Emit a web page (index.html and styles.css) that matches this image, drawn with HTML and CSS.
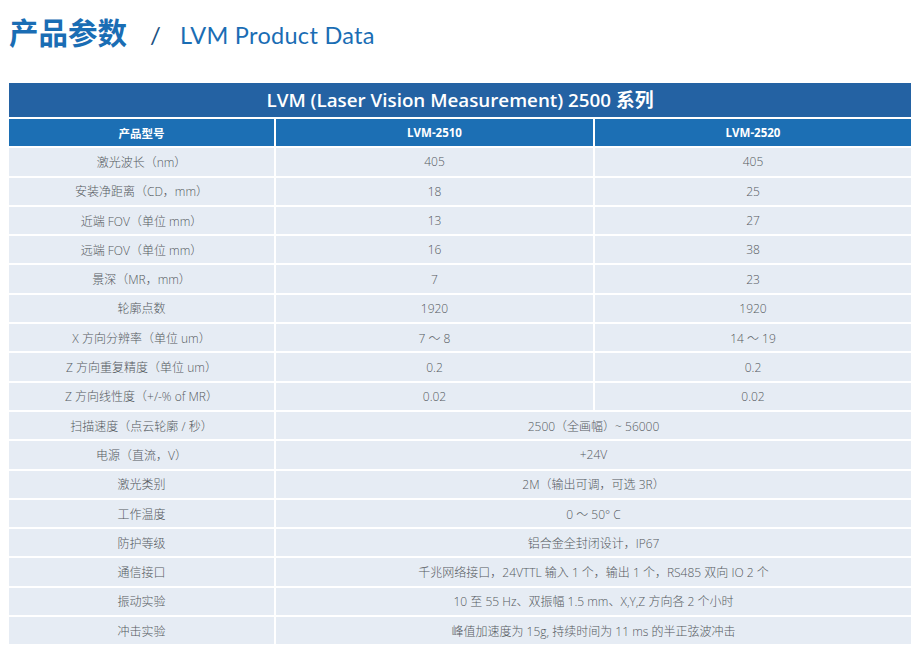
FILE: index.html
```html
<!DOCTYPE html>
<html lang="zh">
<head>
<meta charset="utf-8">
<link rel="stylesheet" href="styles.css">
</head>
<body>
<div class="page">
  <h1 class="heading"><span class="zh">产品参数</span><span class="slash">/</span><span class="en">LVM Product Data</span></h1>
  <div class="table">
    <div class="title">LVM (Laser Vision Measurement) 2500 系列</div>
    <div class="grid">
      <div class="hd">产品型号</div><div class="hd">LVM-2510</div><div class="hd">LVM-2520</div>
      <div class="c">激光波长（nm）</div><div class="c">405</div><div class="c">405</div>
      <div class="c">安装净距离（CD，mm）</div><div class="c">18</div><div class="c">25</div>
      <div class="c">近端 FOV（单位 mm）</div><div class="c">13</div><div class="c">27</div>
      <div class="c">远端 FOV（单位 mm）</div><div class="c">16</div><div class="c">38</div>
      <div class="c">景深（MR，mm）</div><div class="c">7</div><div class="c">23</div>
      <div class="c">轮廓点数</div><div class="c">1920</div><div class="c">1920</div>
      <div class="c">X 方向分辨率（单位 um）</div><div class="c">7 ～ 8</div><div class="c">14 ～ 19</div>
      <div class="c">Z 方向重复精度（单位 um）</div><div class="c">0.2</div><div class="c">0.2</div>
      <div class="c">Z 方向线性度（+/-% of MR）</div><div class="c">0.02</div><div class="c">0.02</div>
      <div class="c">扫描速度（点云轮廓 / 秒）</div><div class="c span">2500（全画幅）~ 56000</div>
      <div class="c">电源（直流，V）</div><div class="c span">+24V</div>
      <div class="c">激光类别</div><div class="c span">2M（输出可调，可选 3R）</div>
      <div class="c">工作温度</div><div class="c span">0 ～ 50° C</div>
      <div class="c">防护等级</div><div class="c span">铝合金全封闭设计，IP67</div>
      <div class="c">通信接口</div><div class="c span">千兆网络接口，24VTTL 输入 1 个，输出 1 个，RS485 双向 IO 2 个</div>
      <div class="c">振动实验</div><div class="c span">10 至 55 Hz、双振幅 1.5 mm、X,Y,Z 方向各 2 个小时</div>
      <div class="c">冲击实验</div><div class="c span">峰值加速度为 15g, 持续时间为 11 ms 的半正弦波冲击</div>
    </div>
  </div>
</div>
</body>
</html>
```

FILE: styles.css
```css
html, body {
  margin: 0;
  padding: 0;
  background: #ffffff;
}

.page {
  padding: 13px 6px 0 9px;
  font-family: "Open Sans", "Noto Sans CJK SC", sans-serif;
}

.heading {
  margin: 0 0 33px 0;
  display: flex;
  align-items: baseline;
  color: #1a6db4;
  font-weight: normal;
  height: 37px;
}

.heading .zh {
  font-family: "Noto Sans CJK SC", sans-serif;
  font-weight: 700;
  font-size: 29.5px;
  line-height: 37px;
}

.heading .slash {
  font-family: "Lato", sans-serif;
  font-size: 24px;
  margin-left: 23px;
  color: #20507f;
}

.heading .en {
  font-family: "Lato", "Open Sans", sans-serif;
  font-size: 23.5px;
  margin-left: 19px;
  letter-spacing: 0.3px;
}

.table {
  width: 902px;
}

.title {
  height: 34px;
  line-height: 34px;
  background: #2462a3;
  color: #ffffff;
  text-align: center;
  font-family: "Open Sans", "Noto Sans CJK SC", sans-serif;
  font-weight: 600;
  font-size: 18.8px;
  margin-bottom: 2px;
}

.grid {
  display: grid;
  grid-template-columns: 265px 317px 316px;
  grid-auto-rows: 27.3px;
  gap: 2px;
}

.grid .hd {
  background: #1c6fb4;
  color: #ffffff;
  font-weight: 700;
  font-size: 11.5px;
  display: flex;
  align-items: center;
  justify-content: center;
  font-family: "Open Sans", "Noto Sans CJK SC", sans-serif;
}

.grid .c {
  background: #e6ecf4;
  color: #555a60;
  font-size: 12px;
  font-weight: 300;
  display: flex;
  align-items: center;
  justify-content: center;
  font-family: "Open Sans", "Noto Sans CJK SC", sans-serif;
}

.grid .span {
  grid-column: span 2;
}
```
